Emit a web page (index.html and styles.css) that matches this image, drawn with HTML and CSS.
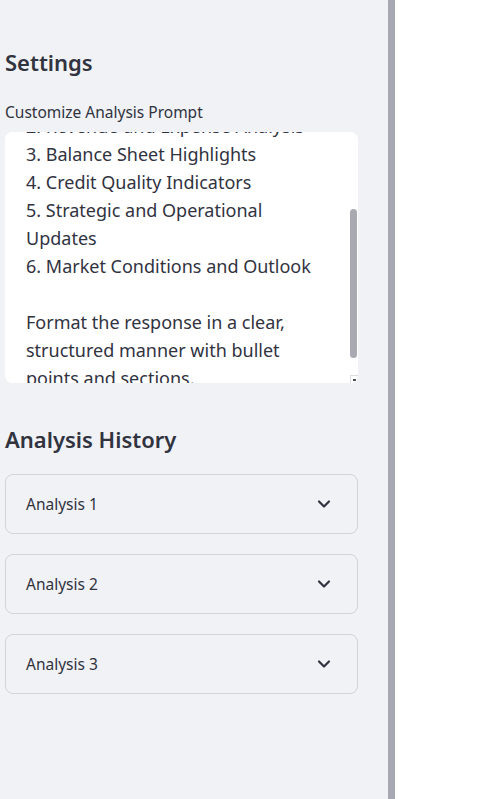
FILE: index.html
```html
<!DOCTYPE html>
<html lang="en">
<head>
<meta charset="utf-8">
<title>Settings</title>
<link rel="stylesheet" href="styles.css">
</head>
<body>
<div class="app">
  <aside class="sidebar">
    <h2 class="heading">Settings</h2>
    <label class="label" for="prompt">Customize Analysis Prompt</label>
    <div class="prompt-wrap">
      <textarea id="prompt" class="prompt">Analyze this financial document and provide:

1. Key Financial Metrics
2. Revenue and Expense Analysis
3. Balance Sheet Highlights
4. Credit Quality Indicators
5. Strategic and Operational Updates
6. Market Conditions and Outlook

Format the response in a clear, structured manner with bullet points and sections.</textarea>
      <span class="thumb"></span>
      <span class="resizer"><span class="grip"></span></span>
    </div>
    <h2 class="heading history">Analysis History</h2>
    <div class="expanders">
      <details class="expander">
        <summary class="expander-head"><span>Analysis 1</span><svg class="chev" viewBox="0 0 24 24" width="24" height="24"><path d="M7 9.5l5 5 5-5" fill="none" stroke="currentColor" stroke-width="2.2" stroke-linecap="round" stroke-linejoin="round"/></svg></summary>
      </details>
      <details class="expander">
        <summary class="expander-head"><span>Analysis 2</span><svg class="chev" viewBox="0 0 24 24" width="24" height="24"><path d="M7 9.5l5 5 5-5" fill="none" stroke="currentColor" stroke-width="2.2" stroke-linecap="round" stroke-linejoin="round"/></svg></summary>
      </details>
      <details class="expander">
        <summary class="expander-head"><span>Analysis 3</span><svg class="chev" viewBox="0 0 24 24" width="24" height="24"><path d="M7 9.5l5 5 5-5" fill="none" stroke="currentColor" stroke-width="2.2" stroke-linecap="round" stroke-linejoin="round"/></svg></summary>
      </details>
    </div>
  </aside>
  <div class="divider"></div>
  <main class="main"></main>
</div>
<script src="script.js"></script>
</body>
</html>
```

FILE: styles.css
```css
* { box-sizing: border-box; }
html, body { margin: 0; padding: 0; height: 100%; }
body {
  font-family: "Noto Sans", "Open Sans", sans-serif;
  color: #31333f;
  background: #ffffff;
}
.app {
  display: flex;
  height: 799px;
}
.sidebar {
  width: 388px;
  flex: none;
  background: #f0f2f6;
  padding: 48px 30px 0 5px;
}
.divider {
  width: 7px;
  flex: none;
  background: #a7a8b2;
}
.main {
  flex: 1;
  background: #ffffff;
}
.heading {
  margin: 0;
  font-size: 22px;
  font-weight: 600;
  line-height: 29px;
  color: #31333f;
}
.history { margin-top: 42px; }
.label {
  display: block;
  margin-top: 25px;
  font-size: 15.5px;
  line-height: 21px;
}
.prompt-wrap {
  position: relative;
  margin-top: 9px;
  width: 353px;
  height: 251px;
  border-radius: 8px;
  background: #ffffff;
  overflow: hidden;
}
.prompt {
  display: block;
  width: 100%;
  height: 100%;
  border: none;
  outline: none;
  border-radius: 8px;
  background: #ffffff;
  color: #31333f;
  font-family: "Noto Sans", "Open Sans", sans-serif;
  font-size: 18px;
  line-height: 28px;
  padding: 16px 28px 16px 21px;
  resize: none;
}
.prompt::-webkit-scrollbar { width: 8px; }
.prompt::-webkit-scrollbar-track { background: transparent; }
.prompt::-webkit-scrollbar-thumb { background: transparent; }
.thumb {
  position: absolute;
  left: 345px;
  top: 77px;
  width: 7px;
  height: 149px;
  border-radius: 4px;
  background: #a9aab1;
  pointer-events: none;
}
.resizer {
  position: absolute;
  left: 345px;
  top: 243px;
  width: 8px;
  height: 8px;
  border-top: 1px solid #dcdde1;
  border-left: 1px solid #dcdde1;
  background: #ffffff;
  pointer-events: none;
}
.grip {
  position: absolute;
  right: 2px;
  bottom: 2px;
  width: 3px;
  height: 2px;
  background: #4a4b55;
}
.expanders {
  display: flex;
  flex-direction: column;
  gap: 20px;
  margin-top: 20px;
}
.expander {
  border: 1px solid #d3d4d9;
  border-radius: 8px;
}
.expander-head {
  list-style: none;
  display: flex;
  align-items: center;
  justify-content: space-between;
  height: 58px;
  padding: 0 21px 0 20px;
  font-size: 15.5px;
  cursor: pointer;
}
.expander-head::-webkit-details-marker { display: none; }
.chev { color: #31333f; flex: none; }
```

FILE: script.js
```js
var ta = document.getElementById('prompt');
ta.scrollTop = ta.scrollHeight - ta.clientHeight - 25;
```
